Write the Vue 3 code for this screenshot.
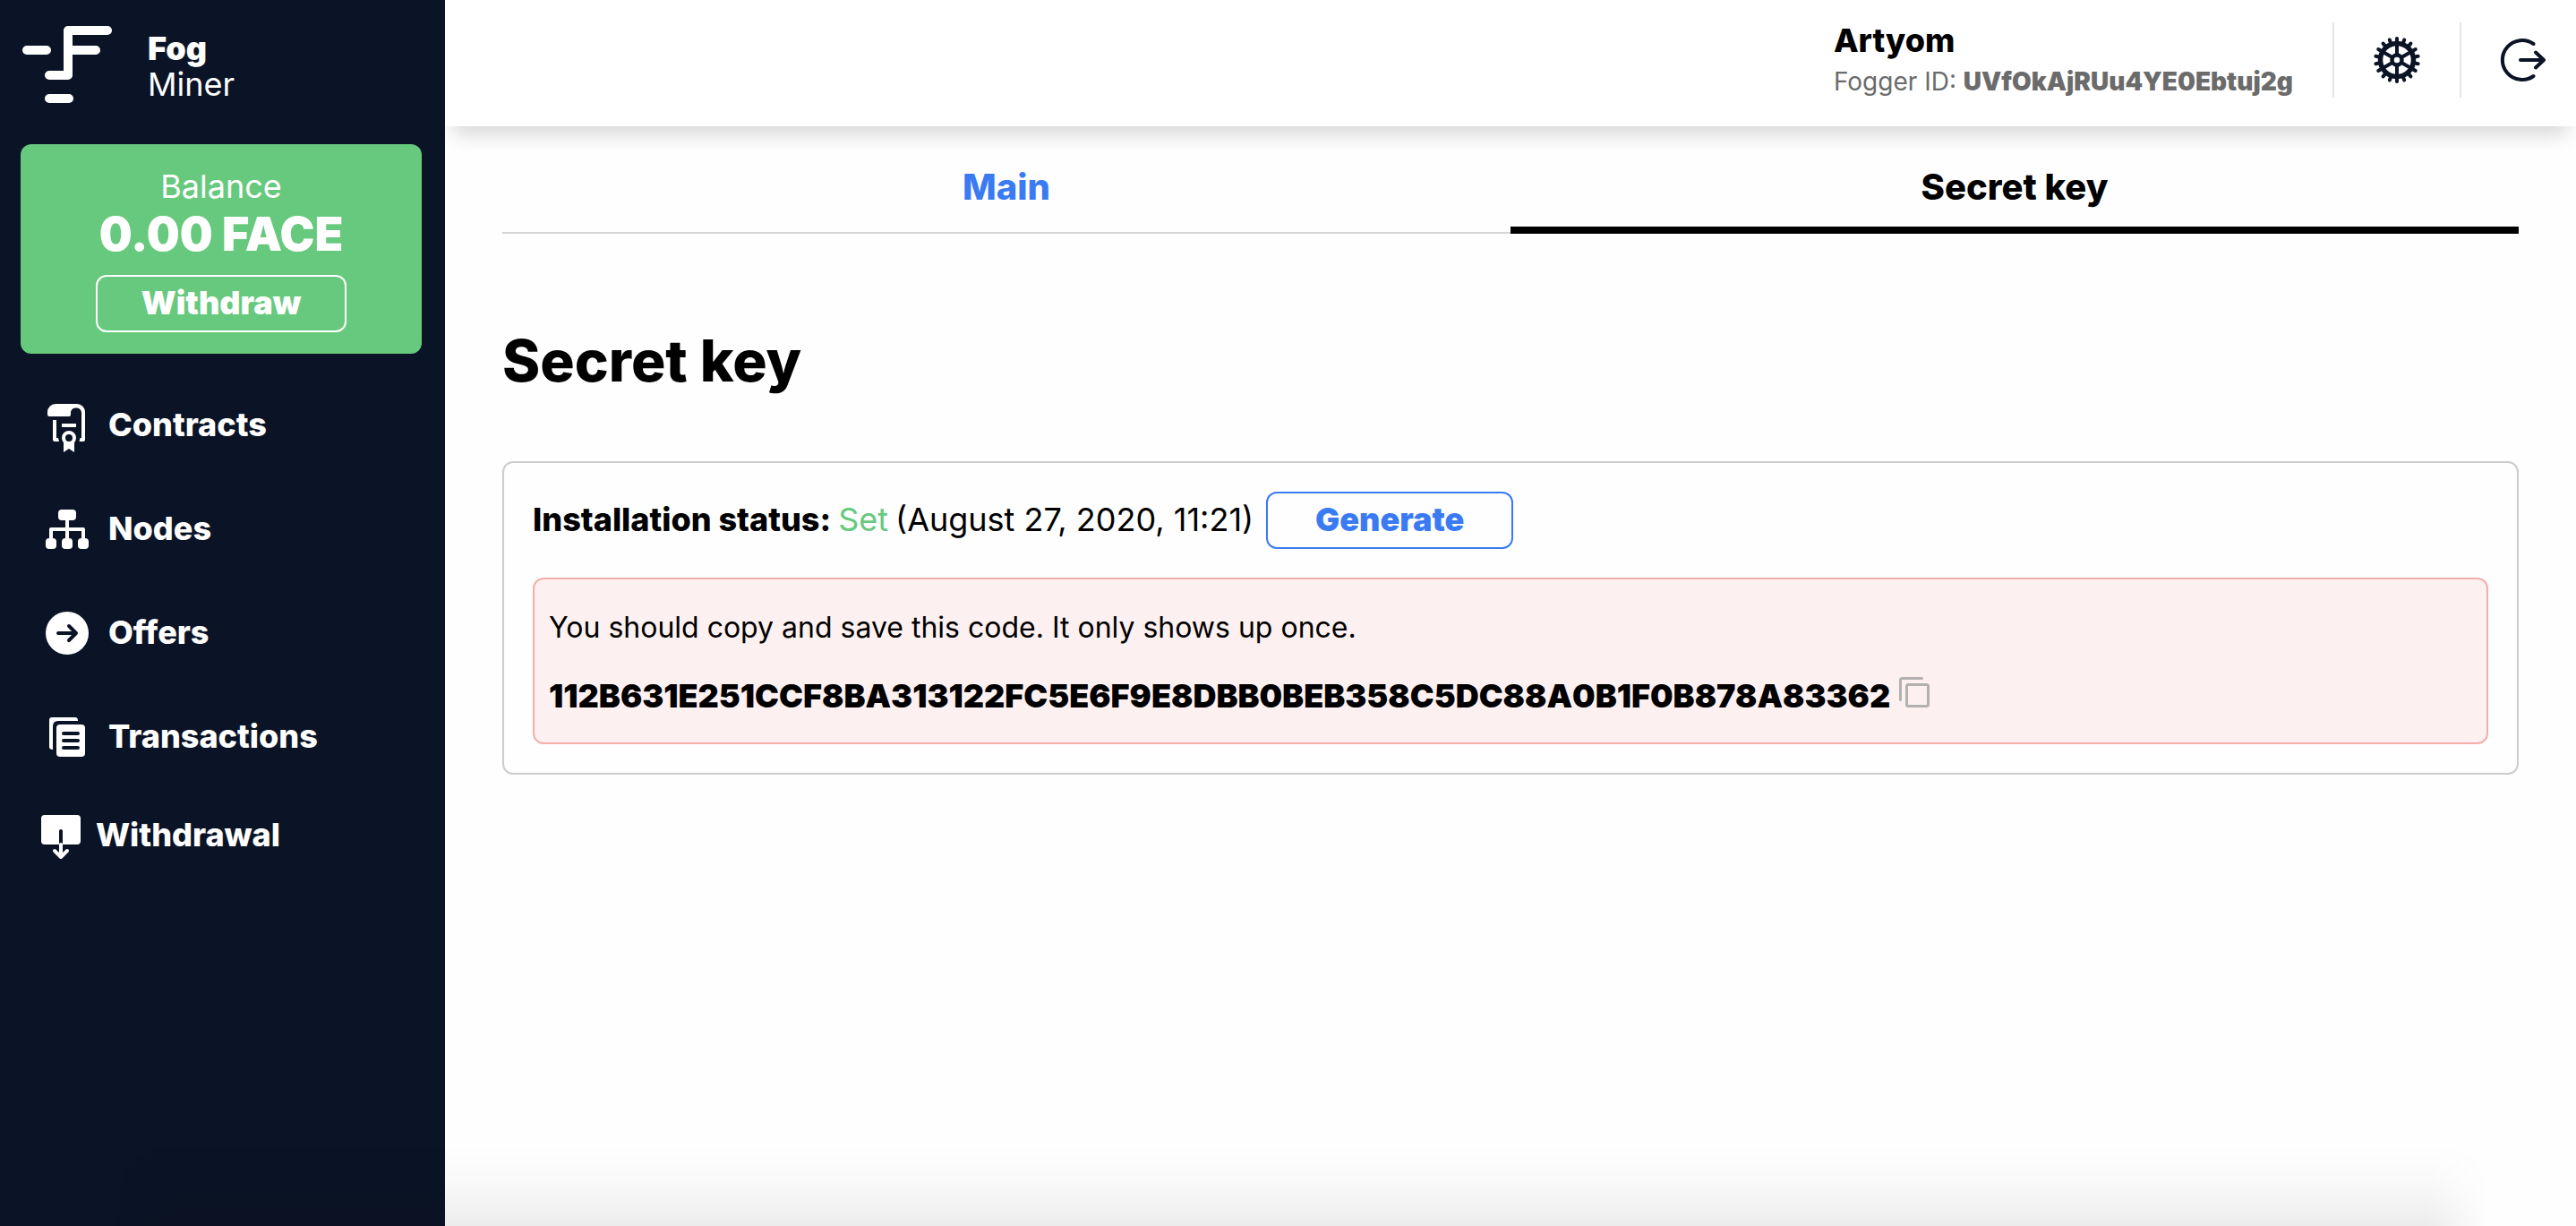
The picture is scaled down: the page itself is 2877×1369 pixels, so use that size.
<script setup>
const teeth = Array.from({ length: 18 }, (_, i) => i * 20)
const spokes = [0, 60, 120, 180, 240, 300]
</script>

<template>
  <div class="page">
    <aside class="sidebar">
      <a class="brand" href="#">
        <svg class="brand-mark" viewBox="0 0 100 86" fill="none" stroke="#fff" stroke-width="10" stroke-linecap="round" stroke-linejoin="round" aria-hidden="true">
          <path d="M5 27H27M95 5H51V55H30M51 27H82M30 81H52" />
        </svg>
        <span class="brand-name"><b>Fog</b><span>Miner</span></span>
      </a>

      <section class="balance">
        <span class="balance-label">Balance</span>
        <strong class="balance-value">0.00 FACE</strong>
        <button class="button button-light" type="button">Withdraw</button>
      </section>

      <nav class="menu">
        <a class="menu-item" href="#">
          <svg viewBox="0 0 60 60" aria-hidden="true">
            <path fill="#fff" d="M17 6H41A9 9 0 0 1 50 15V46Q50 48 48 48H43.500L44.500 44H46V16C46 8.700 34 8.700 34 16V18Q34 20 32 20H10Q8 20 8 18V15A9 9 0 0 1 17 6ZM14 24H18V44H20L21 48H16Q14 48 14 46Z" />
            <path d="M24 30H40" stroke="#fff" stroke-width="4" />
            <path fill="#fff" d="M26 46H38V60L32 56L26 60Z" />
            <circle cx="32" cy="44" r="6" fill="#0b1426" stroke="#fff" stroke-width="4" />
          </svg>
          <span>Contracts</span>
        </a>
        <a class="menu-item" href="#">
          <svg viewBox="0 0 60 60" fill="#fff" aria-hidden="true">
            <rect x="20" y="8" width="20" height="12" rx="4" />
            <rect x="6" y="40" width="12" height="12" rx="4" />
            <rect x="24" y="40" width="12" height="12" rx="4" />
            <rect x="42" y="40" width="12" height="12" rx="4" />
            <path d="M12 42V30H48V42M30 18V42" fill="none" stroke="#fff" stroke-width="4" stroke-linejoin="round" />
          </svg>
          <span>Nodes</span>
        </a>
        <a class="menu-item" href="#">
          <svg viewBox="0 0 60 60" aria-hidden="true">
            <circle cx="30" cy="30" r="24" fill="#fff" />
            <path d="M20 30H40M32 22L40 30L32 38" fill="none" stroke="#0b1426" stroke-width="4" stroke-linecap="round" stroke-linejoin="round" />
          </svg>
          <span>Offers</span>
        </a>
        <a class="menu-item" href="#">
          <svg viewBox="0 0 60 60" aria-hidden="true">
            <path fill="#fff" d="M13 8H39Q42 8 42 12H20Q14 12 14 18V44Q10 44 10 41V11Q10 8 13 8Z" />
            <rect x="18" y="16" width="32" height="36" rx="4" fill="#fff" />
            <path d="M26 26H42M26 34H42M26 42H42" stroke="#0b1426" stroke-width="4" stroke-linecap="round" />
          </svg>
          <span>Transactions</span>
        </a>
        <a class="menu-item menu-item-small" href="#">
          <svg viewBox="0 0 46 52" aria-hidden="true">
            <rect x="1" y="1" width="44" height="33" rx="4" fill="#fff" />
            <path d="M23 19V33" stroke="#0b1426" stroke-width="4" stroke-linecap="round" />
            <path d="M23 34V47M16 41L23 48L30 41" fill="none" stroke="#fff" stroke-width="4" stroke-linecap="round" stroke-linejoin="round" />
          </svg>
          <span>Withdrawal</span>
        </a>
      </nav>
    </aside>

    <div class="content">
      <header class="topbar">
        <div class="user">
          <strong class="user-name">Artyom</strong>
          <span class="user-id">Fogger ID: <b>UVfOkAjRUu4YE0Ebtuj2g</b></span>
        </div>
        <button class="icon-button" type="button" aria-label="Settings">
          <svg viewBox="0 0 60 60" fill="none" stroke="#0b1426" aria-hidden="true">
            <circle cx="30" cy="30" r="18.500" stroke-width="5.500" />
            <circle cx="30" cy="30" r="5.500" stroke-width="4.500" />
            <path v-for="a in spokes" :key="'s' + a" d="M30 23V13" stroke-width="4" :transform="`rotate(${a} 30 30)`" />
            <path v-for="a in teeth" :key="'t' + a" d="M30 11L30 6" stroke-width="4" stroke-linecap="round" :transform="`rotate(${a} 30 30)`" />
          </svg>
        </button>
        <button class="icon-button" type="button" aria-label="Log out">
          <svg viewBox="0 0 60 60" fill="none" stroke="#0b1426" stroke-width="4" stroke-linecap="round" stroke-linejoin="round" aria-hidden="true">
            <path d="M40.500 12A22 22 0 1 0 40.500 48M26 30H52M43 21.500L52 30L43 38.500" />
          </svg>
        </button>
      </header>

      <main class="main">
        <nav class="tabs">
          <a class="tab" href="#">Main</a>
          <a class="tab tab-active" href="#" aria-current="page">Secret key</a>
        </nav>

        <h1 class="title">Secret key</h1>

        <section class="card">
          <div class="status">
            <p class="status-text"><b>Installation status:</b> <span class="status-set">Set</span> <span>(August 27, 2020, 11:21)</span></p>
            <button class="button button-blue" type="button">Generate</button>
          </div>
          <div class="alert">
            <p class="alert-note">You should copy and save this code. It only shows up once.</p>
            <div class="alert-key">
              <strong>112B631E251CCF8BA313122FC5E6F9E8DBB0BEB358C5DC88A0B1F0B878A83362</strong>
              <button class="copy" type="button" aria-label="Copy">
                <svg viewBox="0 0 34 34" fill="none" stroke="#b2b0b0" stroke-width="3" stroke-linejoin="round" stroke-linecap="round" aria-hidden="true">
                  <path d="M1.500 25.500V4Q1.500 1.500 4 1.500H25.500" />
                  <rect x="8.500" y="8.500" width="24" height="24" rx="2" />
                </svg>
              </button>
            </div>
          </div>
        </section>
      </main>
    </div>
    <div class="bottom-shade"></div>
  </div>
</template>

<style>
body {
  margin: 0;
  background: #fefefe;
}
</style>

<style scoped>
.page {
  display: flex;
  min-height: 100vh;
  font-family: Inter, "Liberation Sans", sans-serif;
  font-size: 36px;
  color: #000;
}
a {
  color: inherit;
  text-decoration: none;
}
button {
  font: inherit;
  cursor: pointer;
}
p {
  margin: 0;
}
svg {
  display: block;
}
.sidebar {
  position: relative;
  z-index: 1;
  box-sizing: border-box;
  flex: 0 0 497px;
  padding: 28px 26px 28px 23px;
  background: #0b1426;
  color: #fff;
}
.brand {
  display: flex;
  gap: 40px;
  height: 133px;
  padding-left: 2px;
}
.brand-mark {
  width: 100px;
  height: 88px;
}
.brand-name {
  display: flex;
  flex-direction: column;
  padding-top: 6px;
  line-height: 40px;
}
.brand-name b {
  font-weight: 900;
}
.balance {
  display: flex;
  flex-direction: column;
  align-items: center;
  padding: 24px 0;
  border-radius: 12px;
  background: #67c97d;
}
.balance-label {
  line-height: 46px;
}
.balance-value {
  margin-bottom: 14px;
  font-size: 52px;
  font-weight: 900;
  line-height: 62px;
}
.button {
  box-sizing: border-box;
  height: 64px;
  padding: 0 0 2px;
  border: 2px solid currentColor;
  border-radius: 12px;
  background: none;
  font-weight: 900;
  line-height: 56px;
}
.button-light {
  width: 280px;
  color: #fff;
}
.button-blue {
  width: 276px;
  color: #3a7af2;
}
.menu {
  display: flex;
  flex-direction: column;
  gap: 56px;
  margin-top: 50px;
  padding-left: 22px;
}
.menu-item {
  display: flex;
  align-items: center;
  gap: 16px;
  font-weight: 800;
}
.menu-item span {
  padding-bottom: 2px;
}
.menu-item svg {
  width: 60px;
  height: 60px;
}
.menu-item-small {
  align-items: flex-start;
  line-height: 46px;
}
.menu-item-small svg {
  width: 46px;
  height: 52px;
}
.content {
  flex: 1;
  min-width: 0;
}
.topbar {
  display: flex;
  box-sizing: border-box;
  height: 141px;
  padding: 25px 0 32px;
  justify-content: flex-end;
  background: #fff;
  box-shadow: 0 20px 20px -10px rgba(0, 0, 0, 0.15);
}
.user {
  display: flex;
  flex-direction: column;
  margin-right: 44px;
}
.user-name {
  font-weight: 800;
  line-height: 40px;
}
.user-id {
  padding-top: 6px;
  font-size: 28px;
  line-height: 40px;
  color: #6b6b6b;
}
.user-id b {
  font-weight: 860;
}
.icon-button {
  box-sizing: border-box;
  display: flex;
  align-items: center;
  width: 142px;
  height: 84px;
  padding: 0 40px;
  border: 0;
  border-left: 2px solid #e6e6e6;
  background: none;
}
.icon-button:last-child {
  width: 130px;
}
.icon-button svg {
  flex: none;
  width: 60px;
  height: 60px;
}
.main {
  padding: 0 64px;
}
.tabs {
  display: flex;
}
.tab {
  display: flex;
  flex: 1;
  box-sizing: border-box;
  height: 120px;
  padding-top: 44px;
  justify-content: center;
  border-bottom: 2px solid #d4d4d4;
  color: #3a7af2;
  font-size: 40px;
  font-weight: 800;
  line-height: 48px;
}
.tab-active {
  border-bottom: 0;
  background: linear-gradient(#000, #000) bottom / 100% 8px no-repeat;
  color: #000;
}
.title {
  margin: 102px 0 72px;
  font-size: 64px;
  font-weight: 800;
  line-height: 80px;
}
.card {
  padding: 32px;
  border: 2px solid #ccc;
  border-radius: 12px;
}
.status {
  display: flex;
  align-items: center;
  gap: 14px;
}
.status-text {
  display: flex;
  gap: 8px;
  padding-bottom: 2px;
}
.status-text b {
  font-weight: 800;
}
.status-set {
  color: #67c97d;
}
.alert {
  margin-top: 32px;
  padding: 30px 16px 24px;
  border: 2px solid #f5aeab;
  border-radius: 12px;
  background: #fdf0f0;
}
.alert-note {
  font-size: 32px;
  line-height: 48px;
}
.alert-key {
  display: flex;
  align-items: center;
  gap: 10px;
  margin-top: 24px;
  font-size: 36px;
  line-height: 56px;
}
.alert-key strong {
  font-weight: 860;
}
.copy {
  padding: 0 0 8px;
  border: 0;
  background: none;
}
.copy svg {
  width: 34px;
  height: 34px;
}
.bottom-shade {
  position: fixed;
  z-index: 2;
  right: 96px;
  bottom: 0;
  left: 130px;
  height: 90px;
  background: linear-gradient(rgba(0, 0, 0, 0), rgba(0, 0, 0, 0.02) 45%, rgba(0, 0, 0, 0.07));
  mask-image: linear-gradient(90deg, transparent, #000 70px, #000 calc(100% - 70px), transparent);
  pointer-events: none;
}
</style>
